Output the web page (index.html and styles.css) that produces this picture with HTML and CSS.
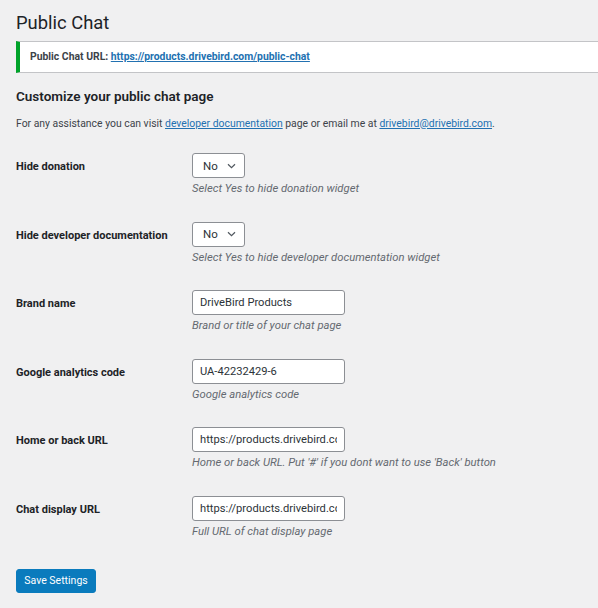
FILE: index.html
```html
<!DOCTYPE html>
<html>
<head>
<meta charset="utf-8">
<link rel="stylesheet" href="styles.css">
</head>
<body>
<div class="wrap">
  <h1 class="title">Public Chat</h1>
  <div class="notice">
    <p><strong>Public Chat URL:</strong> <a href="#" class="strong-link">https://products.drivebird.com/public-chat</a></p>
  </div>
  <h2 class="subtitle">Customize your public chat page</h2>
  <p class="intro">For any assistance you can visit <a href="#">developer documentation</a> page or email me at <a href="#">drivebird@drivebird.com</a>.</p>
  <form class="form">
    <div class="row">
      <label class="label">Hide donation</label>
      <div class="field">
        <div class="select"><span>No</span><svg class="chev" width="9" height="6" viewBox="0 0 9 6"><path d="M1 1.2 L4.5 4.6 L8 1.2" fill="none" stroke="#50575e" stroke-width="1.2"/></svg></div>
        <p class="desc">Select Yes to hide donation widget</p>
      </div>
    </div>
    <div class="row">
      <label class="label">Hide developer documentation</label>
      <div class="field">
        <div class="select"><span>No</span><svg class="chev" width="9" height="6" viewBox="0 0 9 6"><path d="M1 1.2 L4.5 4.6 L8 1.2" fill="none" stroke="#50575e" stroke-width="1.2"/></svg></div>
        <p class="desc">Select Yes to hide developer documentation widget</p>
      </div>
    </div>
    <div class="row">
      <label class="label">Brand name</label>
      <div class="field">
        <input class="input" type="text" value="DriveBird Products">
        <p class="desc">Brand or title of your chat page</p>
      </div>
    </div>
    <div class="row">
      <label class="label">Google analytics code</label>
      <div class="field">
        <input class="input" type="text" value="UA-42232429-6">
        <p class="desc">Google analytics code</p>
      </div>
    </div>
    <div class="row">
      <label class="label">Home or back URL</label>
      <div class="field">
        <input class="input" type="text" value="https://products.drivebird.com/">
        <p class="desc">Home or back URL. Put '#' if you dont want to use 'Back' button</p>
      </div>
    </div>
    <div class="row">
      <label class="label">Chat display URL</label>
      <div class="field">
        <input class="input" type="text" value="https://products.drivebird.com/public-chat">
        <p class="desc">Full URL of chat display page</p>
      </div>
    </div>
    <div class="submit">
      <button type="button" class="button">Save Settings</button>
    </div>
  </form>
</div>
</body>
</html>
```
FILE: styles.css
```css
html, body {
  margin: 0;
  padding: 0;
  background: #f0f0f1;
}
body {
  font-family: Roboto, "Liberation Sans", sans-serif;
  color: #1d2327;
  font-size: 11px;
}
.wrap {
  padding: 10px 0 0 16px;
}
.title {
  margin: 0;
  font-size: 18.4px;
  font-weight: 400;
  line-height: 25px;
  color: #1d2327;
}
.notice {
  margin-top: 6px;
  background: #fff;
  border-top: 1px solid #c3c4c7;
  border-bottom: 1px solid #c3c4c7;
  border-left: 4px solid #00a32a;
  padding: 0 10px;
}
.notice p {
  margin: 0;
  line-height: 30px;
  font-size: 10.4px;
}
.notice strong {
  font-weight: 700;
  color: #3c434a;
}
a {
  color: #2271b1;
  text-decoration: underline;
}
.strong-link {
  font-weight: 700;
}
.subtitle {
  margin: 14px 0 0;
  font-size: 13.5px;
  font-weight: 600;
  line-height: 18px;
}
.intro {
  margin: 11px 0 0;
  line-height: 16px;
  font-size: 10.4px;
  color: #3c434a;
}
.form {
  margin-top: 21px;
}
.row {
  display: grid;
  grid-template-columns: 176px 1fr;
  height: 68.6px;
}
.label {
  font-weight: 700;
  line-height: 24px;
  margin-top: 2px;
}
.field {
  display: flex;
  flex-direction: column;
  align-items: flex-start;
}
.select {
  box-sizing: border-box;
  width: 53px;
  height: 25px;
  border: 1px solid #8c8f94;
  border-radius: 3px;
  background: #fff;
  display: flex;
  align-items: center;
  justify-content: space-between;
  padding: 0 8px 0 10px;
  font-size: 11.5px;
  color: #2c3338;
}
.chev {
  display: block;
}
.input {
  box-sizing: border-box;
  width: 153px;
  height: 25px;
  margin: 0;
  border: 1px solid #8c8f94;
  border-radius: 3px;
  background: #fff;
  padding: 0 7px;
  font-family: Roboto, "Liberation Sans", sans-serif;
  font-size: 11.15px;
  color: #2c3338;
  outline: none;
}
.desc {
  margin: 3px 0 0;
  font-style: italic;
  line-height: 16px;
  font-size: 11.25px;
  color: #646970;
}
.submit {
  padding-top: 4px;
}
.button {
  box-sizing: border-box;
  width: 80px;
  height: 24px;
  background: #0a7bbd;
  border: 1px solid #0a7bbd;
  border-radius: 3px;
  color: #fff;
  font-family: Roboto, "Liberation Sans", sans-serif;
  font-size: 10.5px;
  padding: 0;
}
```
